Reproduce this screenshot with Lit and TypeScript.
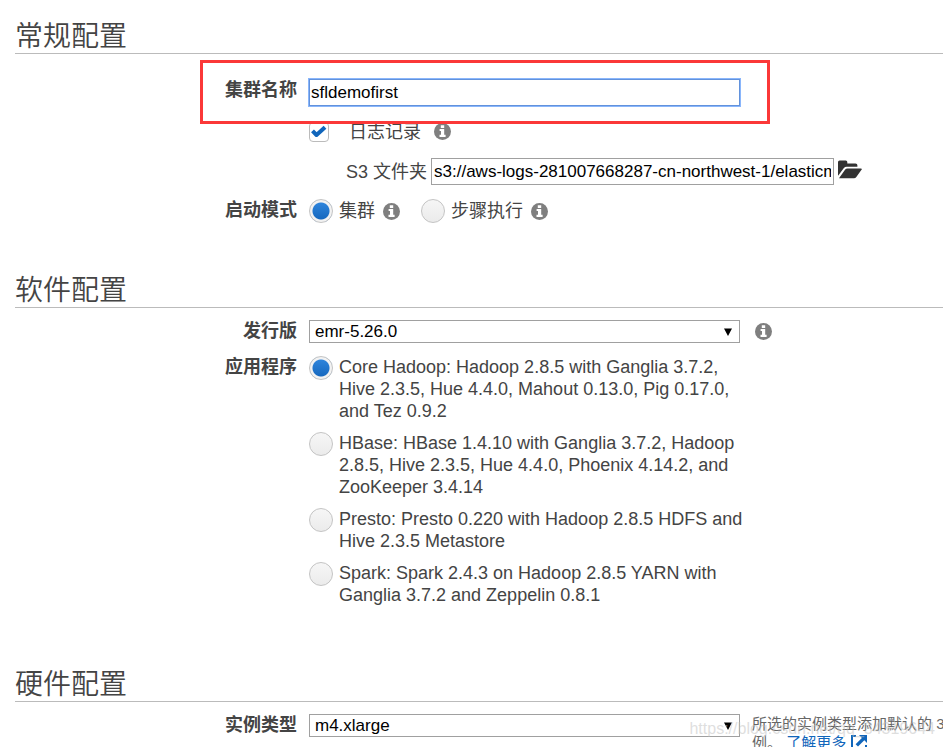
import { LitElement, html, css } from "lit";
import { customElement, state } from "lit/decorators.js";

const infoIcon = html`<svg class="info-svg" viewBox="0 0 17 17" aria-hidden="true">
  <circle cx="8.5" cy="8.5" r="8.5" fill="#7f7f7f"></circle>
  <path fill="#fff" d="M6.800 2.200h3.400v2.700H6.800zM5.600 6h4.600v5.800h1.400v2.100H5.500v-2.100H7V8H5.600z"></path>
</svg>`;

const folderIcon = html`<svg class="folder-svg" viewBox="0 0 24 19" aria-hidden="true">
  <path fill="#333" d="M0 15.4V2Q0 .4 1.6.4h6.2q1.500 0 1.500 1.600v1.400h8.200q1.900 0 1.900 1.900v1.500H8.600Q6.900 6.800 5.700 8.200L.3 15.500z"></path>
  <path fill="#333" d="M1 18.300l6.200-8.700Q8 8.400 9.500 8.400h13.300q1.700 0 .7 1.400l-5.200 7.200Q17.400 18.300 16 18.300z"></path>
</svg>`;

const externalIcon = html`<svg class="external-svg" viewBox="0 0 17 17" aria-hidden="true">
  <path fill="none" stroke="#16b" stroke-width="2" d="M5 1H1v14h14v-5"></path>
  <path fill="#16b" d="M8 0h8v8l-2.700-2.700-6.300 6.300-2.400-2.400 6.300-6.300z"></path>
</svg>`;

const apps = [
  { id: "core", text: "Core Hadoop: Hadoop 2.8.5 with Ganglia 3.7.2, Hive 2.3.5, Hue 4.4.0, Mahout 0.13.0, Pig 0.17.0, and Tez 0.9.2" },
  { id: "hbase", text: "HBase: HBase 1.4.10 with Ganglia 3.7.2, Hadoop 2.8.5, Hive 2.3.5, Hue 4.4.0, Phoenix 4.14.2, and ZooKeeper 3.4.14" },
  { id: "presto", text: "Presto: Presto 0.220 with Hadoop 2.8.5 HDFS and Hive 2.3.5 Metastore" },
  { id: "spark", text: "Spark: Spark 2.4.3 on Hadoop 2.8.5 YARN with Ganglia 3.7.2 and Zeppelin 0.8.1" },
];

@customElement("app-root")
export class AppRoot extends LitElement {
  @state() private app = "core";

  static styles = css`
    :host {
      display: block;
      position: relative;
      height: 100vh;
      overflow: hidden;
      background: #fff;
      color: #444;
      font: 18px/22px "Liberation Sans", "Noto Sans CJK SC", sans-serif;
    }
    * { box-sizing: border-box; }
    form { padding: 14px 0 0 15px; }
    .general { padding-bottom: 45px; }
    .software { padding-bottom: 56px; }
    h2 {
      margin: 0;
      height: 40px;
      border-bottom: 1px solid #bbb;
      font-size: 28px;
      font-weight: 350;
      line-height: 46px;
    }
    .row {
      display: grid;
      grid-template-columns: 282px 431px minmax(0, 1fr);
      column-gap: 12px;
      align-items: start;
      position: relative;
    }
    .name-row { padding-top: 25px; }
    .mode-row { padding-top: 14px; }
    .field-row { padding-top: 12px; }
    .apps-row {
      grid-template-columns: 282px 440px;
      padding-top: 13px;
    }
    .key {
      text-align: right;
      font-weight: 700;
    }
    .text {
      height: 27px;
      margin: 0;
      padding: 0 2px;
      border: 1px solid #a0a0a0;
      border-radius: 0;
      background: #fff;
      color: #000;
      font: inherit;
      font-size: 17px;
      outline: none;
    }
    .name {
      width: 100%;
      padding: 0 1px;
      border-color: #6292dc;
      box-shadow: 0 0 0 1px #8ab6fb;
    }
    .mark {
      position: absolute;
      left: 185px;
      top: 6px;
      width: 570px;
      height: 64px;
      border: 3px solid #fb3838;
      pointer-events: none;
    }
    .logs {
      display: flex;
      align-items: center;
      height: 20px;
      margin: 16px 0 0 294px;
    }
    .logs label { margin: 0 13px 0 20px; }
    .logs button { padding-bottom: 2px; }
    .folder {
      display: flex;
      align-items: center;
      gap: 4px;
      margin: 16px 0 0 331px;
    }
    .folder button { padding-bottom: 4px; }
    .s3 { width: 403px; }
    button {
      display: flex;
      margin: 0;
      padding: 0;
      border: 0;
      background: none;
    }
    .info-svg { display: block; width: 17px; height: 17px; }
    .folder-svg { display: block; width: 24px; height: 19px; }
    .check {
      appearance: none;
      width: 20px;
      height: 20px;
      margin: 0;
      border: 1px solid #bbb;
      border-radius: 4px;
      background: #fff;
    }
    .check-box { display: grid; }
    .check-box > * { grid-area: 1 / 1; }
    .tick { width: 20px; height: 20px; pointer-events: none; }
    .radio {
      appearance: none;
      flex: none;
      width: 24px;
      height: 24px;
      margin: 0;
      border: 1px solid #c4c4c4;
      border-radius: 50%;
      background: linear-gradient(#f6f6f6, #ebebeb);
    }
    .radio:checked {
      background: radial-gradient(circle, transparent 8px, #f2f2f2 9px), linear-gradient(#3389e0, #1163ba);
    }
    .modes { display: flex; align-items: center; height: 24px; }
    .modes label { margin: 0 8px 0 6px; }
    .modes button { margin-right: 21px; }
    .select-box { display: grid; }
    .select-box > * { grid-area: 1 / 1; }
    select {
      appearance: none;
      width: 100%;
      height: 23px;
      margin: 0;
      padding: 0 5px;
      border: 1px solid #a0a0a0;
      border-radius: 0;
      background: #fff;
      color: #000;
      font: inherit;
      font-size: 17px;
      line-height: 20px;
    }
    .arrow {
      place-self: center end;
      width: 8px;
      height: 8px;
      margin-right: 8px;
      pointer-events: none;
    }
    .side { padding: 3px; }
    .apps { display: grid; gap: 10px; }
    .app { display: flex; align-items: start; gap: 6px; }
    .hint {
      margin: 0;
      color: #666;
      font-size: 15px;
      line-height: 19px;
      white-space: nowrap;
    }
    .hint a { color: #16b; text-decoration: none; }
    .external-svg { width: 17px; height: 17px; margin-left: 5px; vertical-align: -4px; }
    .watermark {
      position: absolute;
      right: 8px;
      bottom: 8px;
      color: rgba(190, 190, 190, 0.5);
      font-size: 16px;
      line-height: 20px;
      pointer-events: none;
    }
  `;

  private arrow() {
    return html`<svg class="arrow" viewBox="0 0 8 8" aria-hidden="true"><path d="M0 .5h8L4 8z"></path></svg>`;
  }

  private info(label: string) {
    return html`<button type="button" aria-label=${label}>${infoIcon}</button>`;
  }

  render() {
    return html`
      <form>
        <section class="general">
          <h2>常规配置</h2>
          <div class="row name-row">
            <label class="key" for="name">集群名称</label>
            <input class="text name" id="name" type="text" value="sfldemofirst" />
            <div class="mark"></div>
          </div>
          <div class="logs">
            <span class="check-box">
              <input class="check" id="logging" type="checkbox" checked />
              <svg class="tick" viewBox="0 0 20 20" aria-hidden="true">
                <path fill="none" stroke="#16b" stroke-width="4" stroke-linejoin="round" d="M3.500 8.800l4 4.200L16 5.200"></path>
              </svg>
            </span>
            <label for="logging">日志记录</label>
            ${this.info("日志记录")}
          </div>
          <div class="folder">
            <label for="s3">S3 文件夹</label>
            <input class="text s3" id="s3" type="text" value="s3://aws-logs-281007668287-cn-northwest-1/elasticmapreduce/" />
            <button type="button" aria-label="S3 文件夹">${folderIcon}</button>
          </div>
          <div class="row mode-row">
            <span class="key" id="mode">启动模式</span>
            <div class="modes" role="radiogroup" aria-labelledby="mode">
              <input class="radio" id="cluster" type="radio" name="mode" checked />
              <label for="cluster">集群</label>
              ${this.info("集群")}
              <input class="radio" id="step" type="radio" name="mode" />
              <label for="step">步骤执行</label>
              ${this.info("步骤执行")}
            </div>
          </div>
        </section>

        <section class="software">
          <h2>软件配置</h2>
          <div class="row field-row">
            <label class="key" for="release">发行版</label>
            <div class="select-box">
              <select id="release"><option>emr-5.26.0</option></select>
              ${this.arrow()}
            </div>
            <div class="side">${this.info("发行版")}</div>
          </div>
          <div class="row apps-row">
            <span class="key" id="apps">应用程序</span>
            <div class="apps" role="radiogroup" aria-labelledby="apps">
              ${apps.map(
                (a) => html`<div class="app">
                  <input class="radio" id=${a.id} type="radio" name="app"
                    .checked=${this.app === a.id} @change=${() => (this.app = a.id)} />
                  <label for=${a.id}>${a.text}</label>
                </div>`
              )}
            </div>
          </div>
        </section>

        <section>
          <h2>硬件配置</h2>
          <div class="row field-row">
            <label class="key" for="type">实例类型</label>
            <div class="select-box">
              <select id="type"><option>m4.xlarge</option></select>
              ${this.arrow()}
            </div>
            <p class="hint">所选的实例类型添加默认的 3<br />例。 <a href="#more">了解更多${externalIcon}</a></p>
          </div>
        </section>
      </form>
      <div class="watermark">https://blog.csdn.net/qq_34319644</div>
    `;
  }
}
